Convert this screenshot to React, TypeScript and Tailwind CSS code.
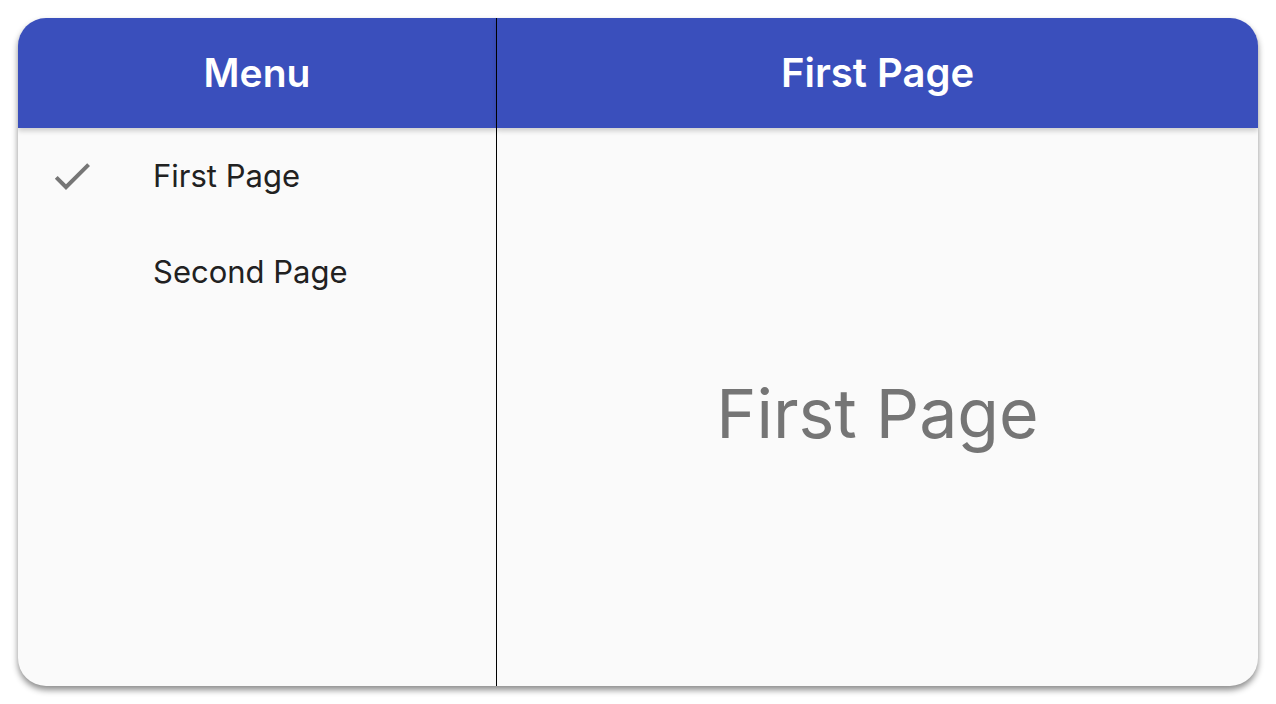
import React, { useState } from 'react';

const pages = ['First Page', 'Second Page'];

const Check = () => (
  <svg viewBox="0 0 24 24" className="w-[48px] h-[48px] fill-[#767676]">
    <path d="M9 16.17L4.83 12l-1.42 1.41L9 19 21 7l-1.41-1.41z" />
  </svg>
);

const App = () => {
  const [active, setActive] = useState(0);

  return (
    <div className="w-[1276px] h-[704px] bg-white p-[18px] font-['Inter',sans-serif]">
      <div className="flex h-[668px] rounded-[28px] overflow-hidden bg-[#fafafa] shadow-[0_4px_6px_rgba(0,0,0,0.45)]">
        {/* Menu */}
        <div className="w-[479px] flex flex-col border-r border-black">
          <div className="h-[110px] bg-[#3a4fbc] flex items-center justify-center text-white text-[39px] font-semibold shadow-[0_3px_5px_rgba(0,0,0,0.18)] z-10">
            Menu
          </div>
          <div className="flex flex-col">
            {pages.map((p, i) => (
              <button
                key={p}
                onClick={() => setActive(i)}
                className="h-[96px] flex items-center text-left text-[#212121] text-[31px]"
              >
                <span className="w-[135px] pl-[30px] flex items-center">
                  {active === i && <Check />}
                </span>
                {p}
              </button>
            ))}
          </div>
        </div>

        {/* Page */}
        <div className="flex-1 flex flex-col">
          <div className="h-[110px] bg-[#3a4fbc] flex items-center justify-center text-white text-[40px] font-semibold shadow-[0_3px_5px_rgba(0,0,0,0.18)] z-10">
            {pages[active]}
          </div>
          <div className="flex-1 flex items-center justify-center pt-[12px] text-[#757575] text-[68px]">
            {pages[active]}
          </div>
        </div>
      </div>
    </div>
  );
};

export default App;
